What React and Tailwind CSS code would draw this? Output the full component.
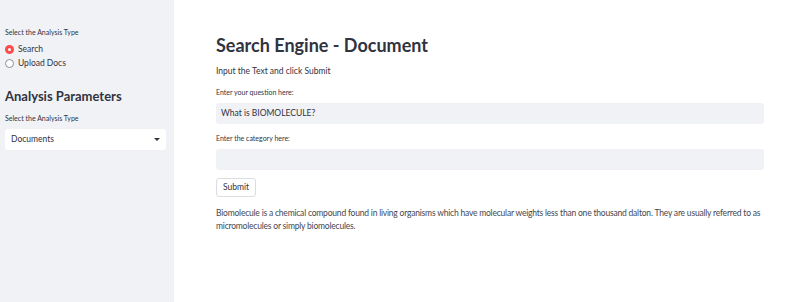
export default function App() {
  return (
    <div className="flex w-[806px] h-[302px] bg-white text-[#31333f]" style={{ fontFamily: 'Lato, "Open Sans", sans-serif' }}>
      <aside className="w-[174px] shrink-0 bg-[#f0f2f6] pl-[5px] pr-[8px] pt-[27px]">
        <p className="text-[7px] leading-[10px] mb-[7px]">Select the Analysis Type</p>
        <div className="flex flex-col gap-[3px]">
          <label className="flex items-center gap-[4px] text-[8.5px] leading-[11px]">
            <span className="w-[9px] h-[9px] rounded-full bg-[#ff4b4b] flex items-center justify-center">
              <span className="w-[3px] h-[3px] rounded-full bg-white" />
            </span>
            Search
          </label>
          <label className="flex items-center gap-[4px] text-[8.5px] leading-[11px]">
            <span className="w-[9px] h-[9px] rounded-full border border-[#8a8d96] bg-white" />
            Upload Docs
          </label>
        </div>
        <h2 className="text-[13px] font-bold leading-[16px] mt-[19px]">Analysis Parameters</h2>
        <p className="text-[7px] leading-[10px] mt-[9px] mb-[6px]">Select the Analysis Type</p>
        <div className="h-[21px] bg-white rounded-[3px] flex items-center justify-between pl-[6px] pr-[6px] text-[8.5px]">
          <span>Documents</span>
          <span className="w-0 h-0 border-l-[3px] border-r-[3px] border-t-[3px] border-l-transparent border-r-transparent border-t-[#31333f]" />
        </div>
      </aside>
      <main className="flex-1 min-w-0 pl-[42px] pr-[42px] pt-[33px]">
        <h1 className="text-[18px] font-bold leading-[24px]">Search Engine - Document</h1>
        <p className="text-[8.5px] leading-[12px] mt-[8px]">Input the Text and click Submit</p>
        <p className="text-[7px] leading-[10px] mt-[10px]">Enter your question here:</p>
        <div className="h-[21px] bg-[#f0f2f6] rounded-[3px] mt-[6px] flex items-center px-[5px] text-[8.5px]">What is BIOMOLECULE?</div>
        <p className="text-[7px] leading-[10px] mt-[9px]">Enter the category here:</p>
        <div className="h-[21px] bg-[#f0f2f6] rounded-[3px] mt-[6px]" />
        <button className="mt-[8px] h-[19px] px-[6px] border border-[#dcdde2] rounded-[3px] bg-white text-[8.5px]">Submit</button>
        <p className="text-[8.5px] leading-[13px] mt-[10px] text-[#44464f] tracking-[-0.2px]">
          <span className="whitespace-nowrap">Biomolecule is a chemical compound found in living organisms which have molecular weights less than one thousand dalton. They are usually referred to as</span>
          <br />
          micromolecules or simply biomolecules.
        </p>
      </main>
    </div>
  );
}
